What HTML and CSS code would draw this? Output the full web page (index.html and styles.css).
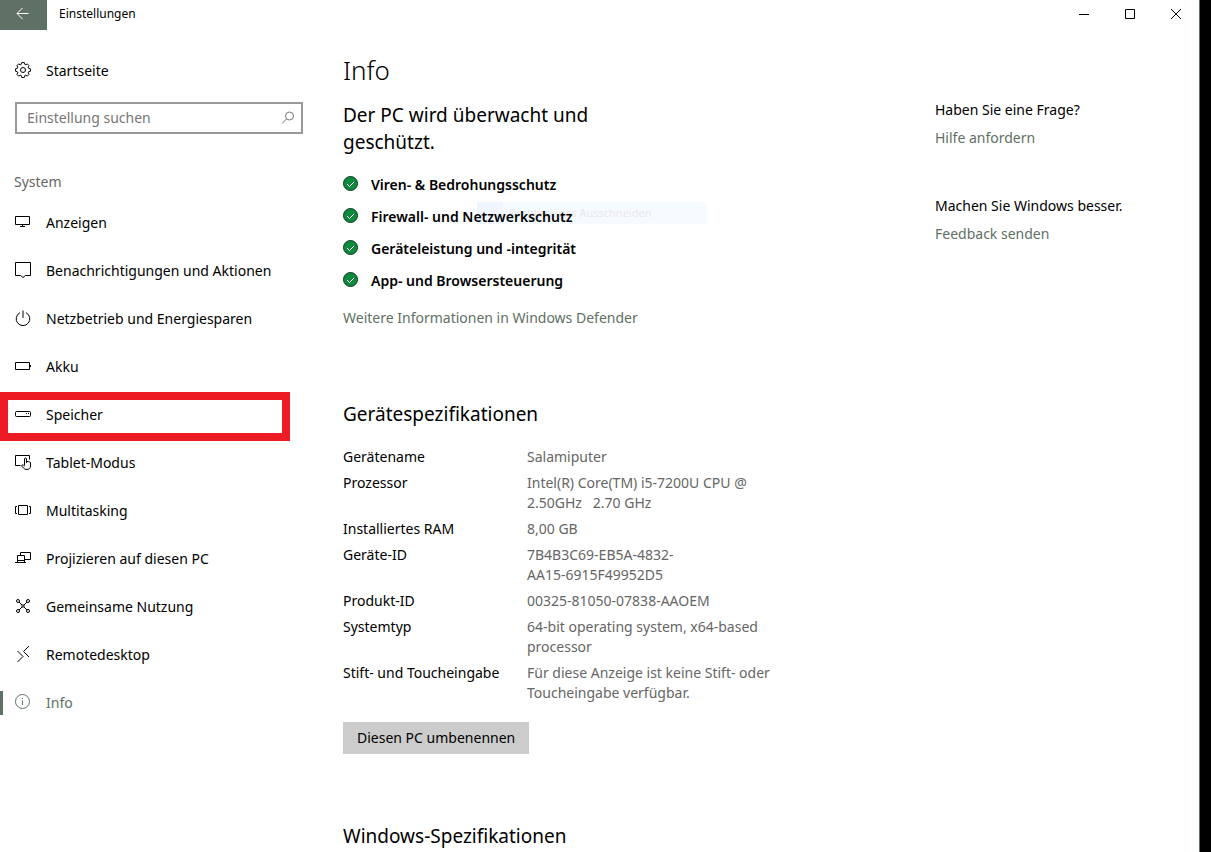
FILE: index.html
```html
<!DOCTYPE html>
<html lang="de">
<head>
    <meta charset="UTF-8">
    <meta name="viewport" content="width=device-width, initial-scale=1.0">
    <title>Einstellungen</title>
    <link rel="stylesheet" href="styles.css">
</head>
<body>
    <div class="window">
        <header class="titlebar">
            <button class="back" aria-label="Zurück">
                <svg width="14" height="12" viewBox="0 0 14 12"><path d="M12.500 5.500H1M6.500 0L1 5.500 6.500 11"/></svg>
            </button>
            <span class="title">Einstellungen</span>
            <div class="controls">
                <button aria-label="Minimieren"><svg width="10" height="10" viewBox="0 0 10 10"><path d="M0 5.500h10"/></svg></button>
                <button aria-label="Maximieren"><svg width="10" height="10" viewBox="0 0 10 10"><path d="M.5.5h9v9h-9z"/></svg></button>
                <button aria-label="Schließen"><svg width="10" height="10" viewBox="0 0 10 10"><path d="M0 0l10 10M10 0L0 10"/></svg></button>
            </div>
        </header>

        <div class="content">
            <nav class="sidebar">
                <a class="item" href="#start">
                    <svg class="icon" viewBox="0 0 16 16"><path d="M6.200 2.400L6.700.6h2.600l.5 1.800 1 .4 1.500-.9 1.800 1.800-.9 1.500.4 1 1.800.5v2.600l-1.800.5-.4 1 .9 1.500-1.800 1.800-1.500-.9-1 .4-.5 1.800H6.700l-.5-1.800-1-.4-1.500.9-1.800-1.800.9-1.500-.4-1L.6 9.300V6.700l1.800-.5.4-1-.9-1.500 1.800-1.800 1.500.9z"/><circle cx="8" cy="8" r="2.500"/></svg>
                    Startseite
                </a>
                <form class="search">
                    <input type="text" placeholder="Einstellung suchen" aria-label="Einstellung suchen">
                    <button type="button" aria-label="Suchen">
                        <svg width="14" height="14" viewBox="0 0 14 14"><circle cx="8.500" cy="5" r="4"/><path d="M5.500 8L1 12.500"/></svg>
                    </button>
                </form>
                <h2 class="group">System</h2>
                <ul>
                    <li><a class="item" href="#anzeigen"><svg class="icon" viewBox="0 0 16 16"><path d="M.5 2.500h14v8H.5zM7.500 11v2M5 12.500h5"/></svg>Anzeigen</a></li>
                    <li><a class="item" href="#benachrichtigungen"><svg class="icon" viewBox="0 0 16 16"><path d="M.5.5h15v13h-5L8 15.500l-2.500-2h-5z"/></svg>Benachrichtigungen und Aktionen</a></li>
                    <li><a class="item" href="#netzbetrieb"><svg class="icon" viewBox="0 0 16 16"><path d="M5 2.700a6.800 6.800 0 1 0 6 0M8 .5v7.500"/></svg>Netzbetrieb und Energiesparen</a></li>
                    <li><a class="item" href="#akku"><svg class="icon" viewBox="0 0 16 16"><path d="M.5 4.500h14v7H.5zM15.500 7v2"/></svg>Akku</a></li>
                    <li class="marked"><a class="item" href="#speicher"><svg class="icon" viewBox="0 0 16 16"><rect x=".5" y="5.500" width="15" height="5" rx="1"/><path d="M11 7.500h1M13 7.500h1"/></svg>Speicher</a></li>
                    <li><a class="item" href="#tablet"><svg class="icon" viewBox="0 0 16 16"><path d="M5.500 11.500h-5v-10h14v4M9.500 11.500V5a1 1 0 0 1 2 0v4M11.500 7.500h2l2 1V12c0 2-1.500 3.500-3.500 3.500-1.500 0-2.500-.5-3.500-1.500L6.600 12c0-1.200 1.200-1.500 2-.7l.9.9"/></svg>Tablet-Modus</a></li>
                    <li><a class="item" href="#multitasking"><svg class="icon" viewBox="0 0 16 16"><path d="M3.500 3.500h9v9h-9zM2 4.500H.5v7H2M14 4.500h1.500v7H14"/></svg>Multitasking</a></li>
                    <li><a class="item" href="#projizieren"><svg class="icon" viewBox="0 0 16 16"><path d="M5.500 5V2.500h10v7H10M2.500 12V5.500h7V12M0 12.500h11M2 10.500h7"/></svg>Projizieren auf diesen PC</a></li>
                    <li><a class="item" href="#nutzung"><svg class="icon" viewBox="0 0 16 16"><circle cx="3" cy="3" r="1.500"/><circle cx="13" cy="3" r="1.500"/><circle cx="3" cy="13" r="1.500"/><circle cx="13" cy="13" r="1.500"/><circle cx="8" cy="8" r="1.200"/><path d="M4 4l3 3M12 4L9 7M4 12l3-3M12 12L9 9"/></svg>Gemeinsame Nutzung</a></li>
                    <li><a class="item" href="#remote"><svg class="icon" viewBox="0 0 16 16"><path d="M2.500 5L8 10.500 2.500 16M14 0L8.500 5.500 14 11"/></svg>Remotedesktop</a></li>
                    <li><a class="item active" href="#info"><svg class="icon" viewBox="0 0 16 16"><circle cx="7.500" cy="7.500" r="7"/><path d="M7.500 6.500V11M7.500 4v1"/></svg>Info</a></li>
                </ul>
            </nav>

            <main>
                <h1>Info</h1>
                <p class="status">Der PC wird überwacht und geschützt.</p>
                <ul class="checks">
                    <li><svg class="check" viewBox="0 0 15 15"><circle cx="7.500" cy="7.500" r="7"/><path d="M4 8l2.500 2.500L11 6"/></svg>Viren- &amp; Bedrohungsschutz</li>
                    <li>
                        <svg class="check" viewBox="0 0 15 15"><circle cx="7.500" cy="7.500" r="7"/><path d="M4 8l2.500 2.500L11 6"/></svg>Firewall- und Netzwerkschutz
                        <!-- fading snip menu entry -->
                        <span class="ghost">Rechteckiges Ausschneiden</span>
                    </li>
                    <li><svg class="check" viewBox="0 0 15 15"><circle cx="7.500" cy="7.500" r="7"/><path d="M4 8l2.500 2.500L11 6"/></svg>Geräteleistung und -integrität</li>
                    <li><svg class="check" viewBox="0 0 15 15"><circle cx="7.500" cy="7.500" r="7"/><path d="M4 8l2.500 2.500L11 6"/></svg>App- und Browsersteuerung</li>
                </ul>
                <a class="link" href="#defender">Weitere Informationen in Windows Defender</a>

                <h2>Gerätespezifikationen</h2>
                <table>
                    <tr><th scope="row">Gerätename</th><td>Salamiputer</td></tr>
                    <tr><th scope="row">Prozessor</th><td>Intel(R) Core(TM) i5-7200U CPU @ 2.50GHz &nbsp; 2.70 GHz</td></tr>
                    <tr><th scope="row">Installiertes RAM</th><td>8,00 GB</td></tr>
                    <tr><th scope="row">Geräte-ID</th><td>7B4B3C69-EB5A-4832-<br>AA15-6915F49952D5</td></tr>
                    <tr><th scope="row">Produkt-ID</th><td>00325-81050-07838-AAOEM</td></tr>
                    <tr><th scope="row">Systemtyp</th><td>64-bit operating system, x64-based processor</td></tr>
                    <tr><th scope="row">Stift- und Toucheingabe</th><td>Für diese Anzeige ist keine Stift- oder Toucheingabe verfügbar.</td></tr>
                </table>
                <button class="rename">Diesen PC umbenennen</button>

                <h2 class="next">Windows-Spezifikationen</h2>
            </main>

            <aside>
                <section>
                    <p>Haben Sie eine Frage?</p>
                    <a class="link" href="#hilfe">Hilfe anfordern</a>
                </section>
                <section>
                    <p>Machen Sie Windows besser.</p>
                    <a class="link" href="#feedback">Feedback senden</a>
                </section>
            </aside>
        </div>
    </div>
</body>
</html>
```
FILE: styles.css
```css
*, *::before, *::after {
    box-sizing: border-box;
}

body {
    margin: 0;
    padding-right: 11px;
    background-color: #000;
    color: #000;
    font-family: "Noto Sans", "Open Sans", sans-serif;
    font-size: 14px;
    line-height: 20px;
}

h1, h2, p, ul {
    margin: 0;
    padding: 0;
    font-weight: normal;
}

ul {
    list-style-type: none;
}

a {
    color: inherit;
    text-decoration: none;
}

button {
    border: none;
    padding: 0;
    background: none;
    font: inherit;
    color: inherit;
}

svg {
    display: block;
    flex: none;
    fill: none;
    stroke: currentColor;
    overflow: visible;
}

.window {
    min-height: 100vh;
    background-color: #fff;
    border-right: 1px solid #5f7064;
}

.titlebar {
    display: flex;
    height: 30px;
}

.back {
    display: flex;
    align-items: center;
    justify-content: center;
    width: 47px;
    padding: 0 2px 2px 0;
    background-color: #5f7064;
    color: #fff;
}

.title {
    flex: 1;
    padding: 4px 12px;
    font-size: 12px;
}

.controls {
    display: flex;
}

.controls button {
    display: flex;
    align-items: center;
    justify-content: center;
    width: 46px;
    height: 28px;
}

.content {
    display: flex;
}

.sidebar {
    flex: none;
    width: 303px;
    padding-top: 17px;
}

.item {
    display: flex;
    align-items: center;
    gap: 15px;
    height: 48px;
    padding-left: 15px;
}

.icon {
    width: 16px;
    height: 16px;
    margin-bottom: 2px;
}

.search {
    display: flex;
    height: 32px;
    margin: 7px 0 0 15px;
    border: 2px solid #999;
}

.search input {
    flex: 1;
    min-width: 0;
    border: none;
    padding: 0 10px;
    outline: none;
    font: inherit;
}

.search input::placeholder {
    color: #767676;
}

.search button {
    width: 28px;
    padding-left: 8px;
    color: #767676;
}

.group {
    margin: 38px 0 7px 14px;
    font-size: 14px;
    color: #666;
}

.sidebar li {
    position: relative;
}

.marked::after {
    content: "";
    position: absolute;
    top: 1px;
    left: 0;
    width: 290px;
    height: 49px;
    border: 8px solid #ed1c24;
}

.active {
    color: #5f7064;
}

.active::before {
    content: "";
    position: absolute;
    left: 0;
    width: 3px;
    height: 24px;
    background-color: #5f7064;
}

main {
    flex: 1;
    padding: 20px 40px 0;
}

h1 {
    font-size: 26px;
    font-weight: 300;
    line-height: 40px;
}

main h2 {
    margin: 72px 0 16px;
    font-size: 19px;
    line-height: 28px;
}

main .next {
    margin: 68px 0 0;
}

.status {
    max-width: 260px;
    margin: 12px 0 13px;
    font-size: 19px;
    line-height: 27px;
}

.checks {
    margin-bottom: 11px;
    isolation: isolate;
}

.checks li {
    position: relative;
    display: flex;
    align-items: center;
    gap: 13px;
    height: 32px;
    font-weight: 600;
}

.check {
    width: 15px;
    height: 15px;
    margin-bottom: 4px;
}

.check circle {
    fill: #10893e;
    stroke: #0b3d1f;
}

.check path {
    stroke: #fff;
}

.ghost {
    position: absolute;
    z-index: -1;
    top: 1px;
    left: 134px;
    width: 230px;
    height: 22px;
    padding-left: 32px;
    background: linear-gradient(to right, #f0f6ff 26px, #f6fbff 26px);
    color: #ebe8e8;
    font-size: 11px;
    font-weight: normal;
    line-height: 22px;
}

.link {
    display: block;
    color: #5f7064;
}

table {
    width: 100%;
    max-width: 442px;
    border-collapse: collapse;
}

th, td {
    padding: 3px 0;
    text-align: left;
    vertical-align: top;
    font-weight: normal;
}

th {
    width: 184px;
}

td {
    color: #666;
}

.rename {
    height: 32px;
    margin-top: 16px;
    padding: 0 14px;
    background-color: #ccc;
}

aside {
    flex: none;
    width: 264px;
    padding-top: 70px;
}

aside section {
    margin-bottom: 48px;
}

aside p {
    margin-bottom: 8px;
}
```
